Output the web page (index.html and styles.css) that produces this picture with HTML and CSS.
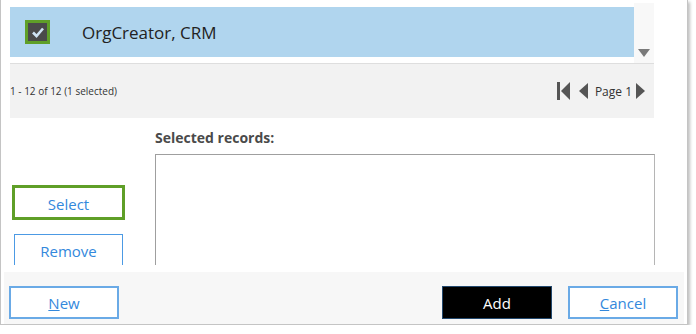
FILE: index.html
```html
<!DOCTYPE html>
<html lang="en">
<head>
    <meta charset="UTF-8">
    <title>Select records</title>
    <link rel="stylesheet" href="styles.css">
</head>
<body>
    <div class="dialog">
        <!-- results list -->
        <div class="list">
            <div class="list-rows">
                <div class="row row-selected">
                    <span class="check">
                        <svg width="14" height="12" viewBox="0 0 14 12"><path d="M2 6.5 L5.5 10 L12 2.5" fill="none" stroke="#cfe3f3" stroke-width="2.6"/></svg>
                    </span>
                    <span class="row-name">OrgCreator, CRM</span>
                </div>
            </div>
            <div class="scrollbar">
                <svg width="12" height="8" viewBox="0 0 12 8"><path d="M0 0 H12 L6 8 Z" fill="#7a7a7a"/></svg>
            </div>
        </div>

        <div class="pager">
            <span class="pager-count">1 - 12 of 12 (1 selected)</span>
            <div class="pager-nav">
                <svg class="nav-first" width="13" height="18" viewBox="0 0 13 18"><rect x="0" y="0" width="3" height="18" fill="#555"/><path d="M13 0 V18 L4 9 Z" fill="#555"/></svg>
                <svg class="nav-prev" width="9" height="16" viewBox="0 0 9 16"><path d="M9 0 V16 L0 8 Z" fill="#555"/></svg>
                <span class="page-label">Page 1</span>
                <svg class="nav-next" width="9" height="16" viewBox="0 0 9 16"><path d="M0 0 V16 L9 8 Z" fill="#555"/></svg>
            </div>
        </div>

        <div class="picker">
            <div class="picker-actions">
                <button class="btn btn-select">Select</button>
                <button class="btn btn-remove">Remove</button>
            </div>
            <div class="picker-selected">
                <div class="selected-label">Selected records:</div>
                <div class="selected-box"></div>
            </div>
        </div>

        <div class="footer">
            <button class="btn btn-footer"><u>N</u>ew</button>
            <div class="footer-right">
                <button class="btn btn-footer btn-primary">Add</button>
                <button class="btn btn-footer"><u>C</u>ancel</button>
            </div>
        </div>
    </div>
</body>
</html>
```

FILE: styles.css
```css
* {
    box-sizing: border-box;
    margin: 0;
    padding: 0;
}

body {
    background: #fff;
    font-family: 'Open Sans', 'Noto Sans', sans-serif;
    color: #333;
}

.dialog {
    width: 688px;
    height: 325px;
    border: 1px solid #c4c4c4;
    border-top: none;
    box-shadow: 2px 2px 3px rgba(0, 0, 0, 0.25);
    background: #fff;
    overflow: hidden;
}

.list {
    display: flex;
    margin: 3px 0 0 9px;
    width: 644px;
    height: 61px;
    border-bottom: 1px solid #dedede;
}

.list-rows {
    flex: 1;
    padding-top: 4px;
}

.row {
    display: flex;
    align-items: center;
    height: 50px;
}

.row-selected {
    background: #b0d5ee;
}

.check {
    display: flex;
    justify-content: center;
    align-items: center;
    width: 25px;
    height: 24px;
    margin-left: 15px;
    background: #4a4a4a;
    border: 3px solid #5f9f28;
}

.row-name {
    margin-left: 32px;
    font-size: 17px;
    color: #222;
}

.scrollbar {
    width: 20px;
    background: #f8f8f8;
    display: flex;
    justify-content: center;
    align-items: flex-end;
    padding-bottom: 6px;
}

.pager {
    display: flex;
    justify-content: space-between;
    align-items: center;
    margin-left: 9px;
    width: 644px;
    height: 54px;
    background: #f2f2f2;
    padding-right: 9px;
}

.pager-count {
    font-size: 10px;
    color: #333;
}

.pager-nav {
    display: flex;
    align-items: center;
}

.nav-first {
    margin-right: 9px;
}

.nav-prev {
    margin-right: 7px;
}

.page-label {
    font-size: 12px;
    color: #333;
    margin-right: 4px;
}

.picker {
    display: flex;
    height: 147px;
    overflow: hidden;
}

.picker-actions {
    width: 154px;
    display: flex;
    flex-direction: column;
    padding-top: 67px;
}

.btn {
    background: #fff;
    border: 1px solid #4c9ae4;
    color: #3388dc;
    font-family: inherit;
    font-size: 15px;
    cursor: pointer;
    flex-shrink: 0;
}

.btn-select {
    width: 113px;
    height: 35px;
    margin-left: 11px;
    padding-top: 3px;
    border: 3px solid #5f9f28;
}

.btn-remove {
    width: 109px;
    height: 38px;
    margin-left: 13px;
    margin-top: 14px;
    padding-bottom: 4px;
}

.picker-selected {
    padding-top: 10px;
}

.selected-label {
    font-size: 14px;
    font-weight: 700;
    color: #4a4a4a;
    height: 26px;
}

.selected-box {
    width: 500px;
    height: 112px;
    border: 1px solid #9f9f9f;
    border-right-color: #b5b5b5;
    border-top-width: 1.5px;
    border-left-width: 1.5px;
}

.footer {
    display: flex;
    justify-content: space-between;
    margin: 7px 3px 0 3px;
    height: 60px;
    background: #f7f7f7;
    padding: 14px 6px 0 5px;
}

.footer-right {
    display: flex;
    gap: 16px;
}

.btn-footer {
    width: 110px;
    height: 33px;
    border-width: 2px;
    border-color: #6aaae6;
}

.btn-primary {
    background: #000;
    color: #fff;
    border: 1px solid #23496e;
}
```
